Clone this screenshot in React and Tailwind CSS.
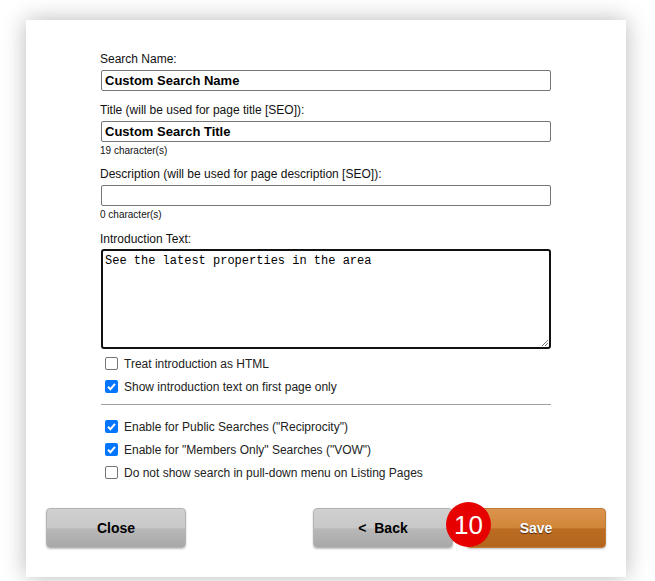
import React from 'react';

const Check = ({ checked, label }) => (
  <label className="flex items-center h-[23px] pl-[5px] text-[12px] text-[#222]">
    <span
      className={
        'w-[13px] h-[13px] rounded-[2px] flex items-center justify-center shrink-0 ' +
        (checked ? 'bg-[#0075ff]' : 'border border-[#767676] bg-white')
      }
    >
      {checked && (
        <svg viewBox="0 0 13 13" width="13" height="13">
          <path d="M3 6.8 L5.4 9.2 L10 3.8" fill="none" stroke="white" strokeWidth="2" />
        </svg>
      )}
    </span>
    <span className="ml-[6px]">{label}</span>
  </label>
);

const Field = ({ label, value, count }) => (
  <div>
    <div className="text-[12px] leading-[14px] text-[#111]">{label}</div>
    <div className="mt-[4px] ml-[1px] h-[21px] border border-[#767676] rounded-[2px] px-[3px] flex items-center text-[13px] font-bold text-black">
      {value}
    </div>
    {count && <div className="text-[10px] leading-[12px] mt-[3px] text-[#111]">{count}</div>}
  </div>
);

export default function App() {
  return (
    <div className="w-[655px] h-[581px] bg-white pt-[20px] pl-[26px] font-['Liberation_Sans',Arial,sans-serif]">
      <div className="w-[600px] h-[557px] bg-white shadow-[0_0_22px_rgba(0,0,0,0.28)] px-[20px] pt-[32px]">
        <div className="ml-[54px] w-[451px]">
          <Field label="Search Name:" value="Custom Search Name" />
          <div className="mt-[12px]">
            <Field label="Title (will be used for page title [SEO]):" value="Custom Search Title" count="19 character(s)" />
          </div>
          <div className="mt-[10px]">
            <Field label="Description (will be used for page description [SEO]):" value="" count="0 character(s)" />
          </div>
          <div className="mt-[11px] text-[12px] leading-[14px] text-[#111]">Introduction Text:</div>
          <div className="relative mt-[3px] ml-[1px] h-[100px] border-2 border-[#111] rounded-[3px] px-[2px] pt-[3px] font-['Liberation_Mono','DejaVu_Sans_Mono',monospace] text-[12px] leading-[14px] text-black">
            See the latest properties in the area
            <svg className="absolute right-0 bottom-0" width="9" height="9" viewBox="0 0 9 9">
              <path d="M8 2 L2 8 M8 5 L5 8" stroke="#777" strokeWidth="1" />
            </svg>
          </div>
          <div className="mt-[3px]">
            <Check label="Treat introduction as HTML" />
            <Check checked label="Show introduction text on first page only" />
          </div>
          <div className="mt-[6px] ml-[1px] h-px bg-[#a0a0a0]" />
          <div className="mt-[10px]">
            <Check checked label={'Enable for Public Searches ("Reciprocity")'} />
            <Check checked label={'Enable for "Members Only" Searches ("VOW")'} />
            <Check label="Do not show search in pull-down menu on Listing Pages" />
          </div>
        </div>
        <div className="mt-[24px] flex items-center">
          <button className="w-[140px] h-[40px] rounded-[4px] border border-[#b4b4b4] bg-[linear-gradient(#d0d0d0_0%,#c8c8c8_50%,#b8b8b8_52%,#a8a8a8_100%)] text-[14px] font-bold text-black shadow-[0_1px_2px_rgba(0,0,0,0.25)]">
            Close
          </button>
          <div className="flex-1" />
          <button className="w-[140px] h-[40px] rounded-[4px] border border-[#b4b4b4] bg-[linear-gradient(#d0d0d0_0%,#c8c8c8_50%,#b8b8b8_52%,#a8a8a8_100%)] text-[14px] font-bold text-black shadow-[0_1px_2px_rgba(0,0,0,0.25)]">
            &lt;&nbsp; Back
          </button>
          <div className="relative ml-[13px]">
            <button className="w-[140px] h-[40px] rounded-[4px] border border-[#c07a3a] bg-[linear-gradient(#dc944f_0%,#d08638_50%,#bb6c22_52%,#b5661e_100%)] text-[14px] font-bold text-white [text-shadow:0_1px_1px_#4a2a10] shadow-[0_1px_2px_rgba(0,0,0,0.25)]">
              Save
            </button>
            <div className="absolute left-[-20px] top-[-6px] w-[45px] h-[45px] rounded-full bg-[#e60000] flex items-center justify-center text-white text-[26px] leading-none">
              10
            </div>
          </div>
        </div>
      </div>
    </div>
  );
}
